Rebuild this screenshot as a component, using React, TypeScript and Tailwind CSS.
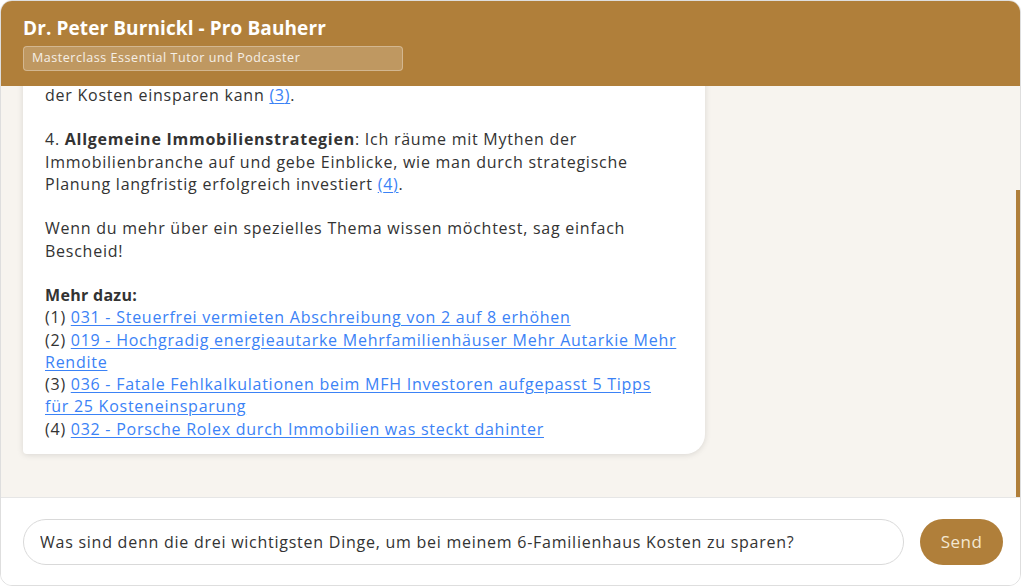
import { useState } from "react"

const font = { fontFamily: '"Open Sans", "Noto Sans", sans-serif' }

const sources = [
  { nr: 1, title: "031 - Steuerfrei vermieten Abschreibung von 2 auf 8 erhöhen" },
  { nr: 2, title: "019 - Hochgradig energieautarke Mehrfamilienhäuser Mehr Autarkie Mehr Rendite" },
  { nr: 3, title: "036 - Fatale Fehlkalkulationen beim MFH Investoren aufgepasst 5 Tipps für 25 Kosteneinsparung" },
  { nr: 4, title: "032 - Porsche Rolex durch Immobilien was steckt dahinter" },
]

function Ref({ n }: { n: number }) {
  return (
    <a href="#" className="text-[#3b82f6] underline underline-offset-2">
      ({n})
    </a>
  )
}

export default function App() {
  const [message, setMessage] = useState(
    "Was sind denn die drei wichtigsten Dinge, um bei meinem 6-Familienhaus Kosten zu sparen?",
  )

  return (
    <div className="w-[1024px] h-[588px] bg-white" style={font}>
      <div className="w-[1021px] h-[586px] flex flex-col rounded-xl border border-[#dedede] overflow-hidden bg-white">
        {/* Header */}
        <div className="bg-[#b07f3a] px-[22px] pt-[13px] pb-[15px] shrink-0 relative z-10">
          <h1 className="text-[19px] leading-[28px] font-bold text-white tracking-[0.1px]">
            Dr. Peter Burnickl - Pro Bauherr
          </h1>
          <div className="mt-[4px] w-[380px] h-[25px] rounded-[4px] border border-white/30 bg-white/20 px-[8px] flex items-center">
            <span className="text-[12.5px] tracking-[0.55px] text-white/85">
              Masterclass Essential Tutor und Podcaster
            </span>
          </div>
        </div>

        {/* Messages */}
        <div className="relative flex-1 min-h-0 overflow-hidden bg-[#f7f4ef] flex flex-col justify-end px-[22px] pb-[43px]">
          <div className="w-[682px] shrink-0 bg-white rounded-[20px] rounded-bl-[4px] shadow-[0_1px_6px_rgba(0,0,0,0.12)] pl-[22px] pr-[26px] pt-[14px] pb-[14px] text-[16px] leading-[22.3px] tracking-[0.75px] text-[#333333]">
            <p className="mb-[22px]">
              Hallo! Ich bin Dr. Peter Burnickl und helfe dir gerne weiter. In meinen Podcasts spreche ich über
              folgende Themen:
            </p>
            <p className="mb-[22px]">
              3. <strong>Kostenoptimierung</strong>: Ich zeige, wie man Fehlkalkulationen vermeidet und bis zu 25 %
              <br />
              der Kosten einsparen kann <Ref n={3} />.
            </p>
            <p className="mb-[22px]">
              4. <strong>Allgemeine Immobilienstrategien</strong>: Ich räume mit Mythen der Immobilienbranche auf und
              gebe Einblicke, wie man durch strategische Planung langfristig erfolgreich investiert <Ref n={4} />.
            </p>
            <p className="mb-[22px]">
              Wenn du mehr über ein spezielles Thema wissen möchtest, sag einfach Bescheid!
            </p>
            <p className="font-bold tracking-[0.3px]">Mehr dazu:</p>
            {sources.map((s) => (
              <div key={s.nr}>
                ({s.nr}){" "}
                <a href="#" className="text-[#3b82f6] underline underline-offset-2">
                  {s.title}
                </a>
              </div>
            ))}
          </div>

          {/* scrollbar thumb */}
          <div className="absolute right-0 top-[104px] w-[4px] h-[308px] bg-[#b07f3a]" />
        </div>

        {/* Input */}
        <div className="shrink-0 h-[88px] bg-white border-t border-[#e6e6e6] flex items-center gap-[16px] pl-[22px] pr-[18px]">
          <input
            value={message}
            onChange={(e) => setMessage(e.target.value)}
            className="shrink-0 w-[881px] h-[46px] rounded-full border border-[#d9d9d9] pl-[16px] pr-[16px] text-[16px] tracking-[0.75px] text-[#333333] outline-none"
            style={font}
          />
          <button
            className="shrink-0 w-[83px] h-[46px] rounded-full bg-[#b07f3a] text-[#f3e8d2] text-[17px] tracking-[0.5px]"
            style={font}
          >
            Send
          </button>
        </div>
      </div>
    </div>
  )
}
